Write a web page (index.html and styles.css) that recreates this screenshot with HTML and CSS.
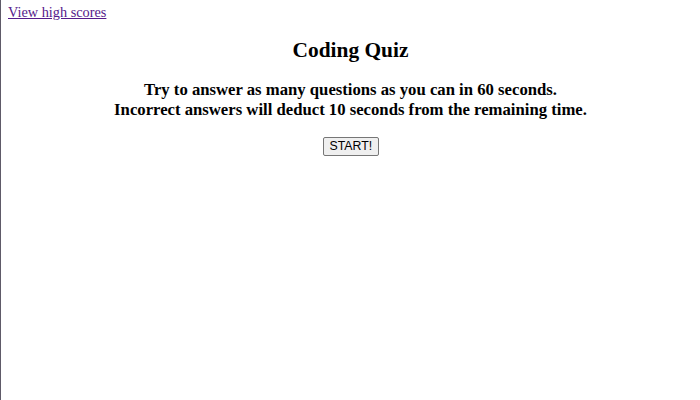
FILE: index.html
```html
<!DOCTYPE html>
<html>
<head>
<meta charset="utf-8">
<title>Coding Quiz</title>
<link rel="stylesheet" href="styles.css">
</head>
<body>
<header class="top">
  <a class="scores-link" href="#">View high scores</a>
</header>
<main class="intro">
  <h2 class="title">Coding Quiz</h2>
  <h3 class="rules">Try to answer as many questions as you can in 60 seconds.<br>Incorrect answers will deduct 10 seconds from the remaining time.</h3>
  <button class="start">START!</button>
</main>
</body>
</html>
```
FILE: styles.css
```css
html {
  border-left: 1px solid #5e5a68;
  min-height: 100%;
  box-sizing: border-box;
}
body {
  margin: 0 7px;
  font-family: "Liberation Serif", serif;
  color: #000;
}
.top {
  padding-top: 4px;
  font-size: 14.3px;
  line-height: 16px;
}
.scores-link {
  color: #551a8b;
}
.intro {
  text-align: center;
}
.title {
  font-size: 21.4px;
  line-height: 25px;
  margin: 18px 0 17px;
}
.rules {
  font-size: 16.7px;
  line-height: 20px;
  margin: 0 0 16px;
}
.start {
  font-family: "Liberation Sans", Arial, sans-serif;
  font-size: 12.3px;
  line-height: 13px;
  padding: 2px 6px;
  height: 19px;
  width: 56px;
  border: 1px solid #767676;
  border-radius: 2px;
  background: #efefef;
  color: #000;
}
```
